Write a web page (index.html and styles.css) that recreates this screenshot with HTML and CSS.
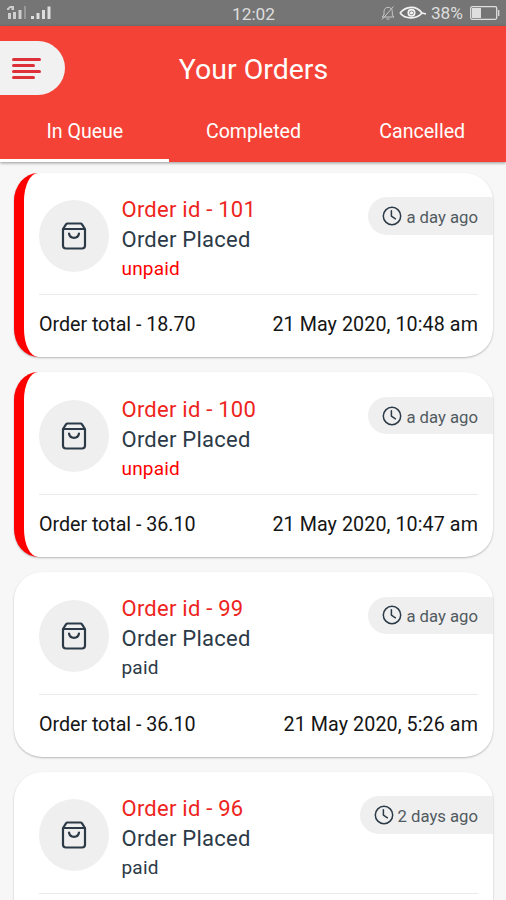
FILE: index.html
```html
<!DOCTYPE html>
<html lang="en">
<head>
<meta charset="utf-8">
<title>Your Orders</title>
<link rel="stylesheet" href="styles.css">
</head>
<body>
<svg class="defs" aria-hidden="true">
  <symbol id="bag" viewBox="0 0 26 28" fill="none" stroke="currentColor" stroke-width="2.200" stroke-linejoin="round" stroke-linecap="round">
    <path d="M2 7 5 2.300Q5.500 1.500 6.400 1.500H19.600Q20.500 1.500 21 2.300L24 7V23.500Q24 26.500 21 26.500H5Q2 26.500 2 23.500ZM2 7H24M8 11.500C9 17.200 17 17.200 18 11.500"/>
  </symbol>
  <symbol id="clock" viewBox="0 0 20 20" fill="none" stroke="currentColor" stroke-width="1.5" stroke-linecap="round" stroke-linejoin="round">
    <circle cx="10" cy="10" r="8.7"/><path d="M9.4 4.8V10.2L13.4 12.8"/>
  </symbol>
</svg>
<div class="status">
  <svg class="signal" viewBox="0 0 46 16" fill="currentColor"><path d="M1 3.500 4 1H8V5H5.500V3H4L3 5H1ZM2 8h3v6H2zM7 7h3v7H7zM12.500 5h3v9h-3z" opacity=".85"/><path d="M18 1h2v13H18z" opacity=".35"/><path d="M25 11h3v3h-3zM30.500 8h3v6h-3zM36 5h3v9h-3zM41.500 1.500h3V14h-3z"/></svg>
  <span class="time">12:02</span>
  <div class="indicators">
    <svg class="bell" viewBox="0 0 14 16" fill="none" stroke="currentColor"><path d="M1 12H13L11.300 10V6.500C11.300 1 3 1 3 6.500V10ZM5.500 14H8.500M1 14.500 12.500 1.500"/></svg>
    <svg class="eye" viewBox="0 0 28 14" fill="none" stroke="currentColor" stroke-width="1.700"><path d="M1 7C7 0 17-1 23 7C18 13 7 14 1 7M23 7L27 8"/><circle cx="12.500" cy="6.800" r="3.200"/><circle cx="12.500" cy="6.800" r=".8"/></svg>
    <span class="percent">38%</span>
    <svg class="battery" viewBox="0 0 30 14" fill="none" stroke="currentColor" stroke-width="1.300"><rect x=".7" y=".7" width="26" height="12.600" rx="1.500"/><path d="M28.700 4V10"/><path d="M2 2H11V12H2Z" fill="currentColor" stroke="none"/></svg>
  </div>
</div>
<header class="header">
  <div class="titlebar">
    <button class="menu" aria-label="Menu"><i></i><i></i><i></i><i></i></button>
    <h1>Your Orders</h1>
  </div>
  <nav class="tabs">
    <a class="tab active">In Queue</a>
    <a class="tab">Completed</a>
    <a class="tab">Cancelled</a>
  </nav>
</header>
<main class="orders">
  <article class="card unpaid">
    <div class="top">
      <div class="avatar"><svg><use href="#bag"/></svg></div>
      <div class="info"><h2>Order id - 101</h2><p class="state">Order Placed</p><p class="pay">unpaid</p></div>
      <div class="ago"><svg><use href="#clock"/></svg><span>a day ago</span></div>
    </div>
    <div class="bottom"><span class="total">Order total - 18.70</span><span class="date">21 May 2020, 10:48 am</span></div>
  </article>
  <article class="card unpaid">
    <div class="top">
      <div class="avatar"><svg><use href="#bag"/></svg></div>
      <div class="info"><h2>Order id - 100</h2><p class="state">Order Placed</p><p class="pay">unpaid</p></div>
      <div class="ago"><svg><use href="#clock"/></svg><span>a day ago</span></div>
    </div>
    <div class="bottom"><span class="total">Order total - 36.10</span><span class="date">21 May 2020, 10:47 am</span></div>
  </article>
  <article class="card">
    <div class="top">
      <div class="avatar"><svg><use href="#bag"/></svg></div>
      <div class="info"><h2>Order id - 99</h2><p class="state">Order Placed</p><p class="pay">paid</p></div>
      <div class="ago"><svg><use href="#clock"/></svg><span>a day ago</span></div>
    </div>
    <div class="bottom"><span class="total">Order total - 36.10</span><span class="date">21 May 2020, 5:26 am</span></div>
  </article>
  <article class="card">
    <div class="top">
      <div class="avatar"><svg><use href="#bag"/></svg></div>
      <div class="info"><h2>Order id - 96</h2><p class="state">Order Placed</p><p class="pay">paid</p></div>
      <div class="ago"><svg><use href="#clock"/></svg><span>2 days ago</span></div>
    </div>
  </article>
</main>
</body>
</html>
```
FILE: styles.css
```css
* { box-sizing: border-box; }
body {
  margin: 0;
  height: 900px;
  overflow: hidden;
  display: flex;
  flex-direction: column;
  background: #f7f7f7;
  font-family: Roboto, sans-serif;
  color: #2c3a47;
}
h1, h2, p { margin: 0; font-weight: 400; }
svg { display: block; }
.defs { position: absolute; width: 0; height: 0; }

.status {
  flex: none;
  height: 25.500px;
  padding: 0 6px 0 6px;
  display: grid;
  grid-template-columns: 1fr auto 1fr;
  align-items: center;
  background: #757575;
  color: #dedede;
  font-size: 17.300px;
  line-height: 24px;
}
.signal { width: 46px; height: 16px; }
.time { padding: 2px 0 0 1px; }
.indicators { display: flex; justify-content: flex-end; align-items: center; }
.bell { width: 14px; height: 16px; margin-right: 4px; opacity: .8; }
.eye { width: 28px; height: 14px; margin-right: 4px; color: #f4f4f4; }
.percent { margin-right: 7px; }
.battery { width: 30px; height: 14px; }

.header {
  position: relative;
  flex: none;
  height: 136.500px;
  background: #f44336;
  color: #fff;
  box-shadow: 0 1px 3px rgba(0, 0, 0, .4);
}
.titlebar {
  height: 85px;
  display: grid;
  grid-template-columns: 65px 1fr 65px;
  align-items: center;
}
.titlebar h1 { text-align: center; font-size: 28.500px; line-height: 34px; padding: 4px 0 0 1px; }
.menu {
  width: 65px;
  height: 54px;
  border: 0;
  border-radius: 0 27px 27px 0;
  background: #f1f1f1;
  padding: 0 0 0 12px;
  display: flex;
  flex-direction: column;
  justify-content: center;
  gap: 3px;
}
.menu i { width: 29px; height: 3px; border-radius: 2px; background: #dd3038; }
.menu i:nth-child(even) { width: 23px; }
.tabs { display: grid; grid-template-columns: repeat(3, 1fr); height: 51.500px; }
.tab { text-align: center; font-size: 19.600px; line-height: 24px; padding: 9px 0 0 1px; border-bottom: 3.500px solid transparent; }
.tab.active { border-bottom-color: #fff; }

.orders {
  flex: 1;
  min-height: 0;
  overflow: hidden;
  padding: 10.700px 13px 0 14px;
  display: flex;
  flex-direction: column;
  gap: 15px;
}
.card {
  flex: none;
  height: 184.700px;
  border-radius: 28px;
  background: #fff;
  box-shadow: 0 1px 2px rgba(0, 0, 0, .26);
  padding-left: 25px;
}
.card.unpaid {
  border-left: 10px solid #f00;
  border-radius: 24px 28px 28px 24px / 28px;
  padding-left: 15px;
}
.top { display: flex; align-items: flex-start; height: 122.500px; padding-top: 24.500px; margin-right: 15px; border-bottom: 1.500px solid #ebebeb; }
.avatar {
  width: 70px;
  height: 72px;
  margin-top: 3px;
  border-radius: 50%;
  background: #efefef;
  display: flex;
  align-items: center;
  justify-content: center;
}
.avatar svg { width: 26px; height: 28px; margin-right: 1px; }
.info { margin: -2.200px auto 0 12.500px; white-space: nowrap; }
.info h2 { color: #ee2420; font-size: 22px; line-height: 30px; letter-spacing: .24px; }
.state { font-size: 22px; line-height: 30px; letter-spacing: .24px; }
.pay { font-size: 19px; line-height: 28px; letter-spacing: .2px; }
.unpaid .pay { color: #f00; }
.ago {
  height: 37.500px;
  margin-right: -15px;
  padding: 1px 15px 0 14px;
  border-radius: 19px 0 0 19px;
  background: #efefef;
  display: flex;
  align-items: center;
  gap: 4px;
  font-size: 16.700px;
  color: #525a61;
  white-space: nowrap;
}
.ago svg { width: 20px; height: 20px; margin-top: -1px; color: #2c3a47; }
.ago span { padding-top: 2px; }
.bottom { display: flex; justify-content: space-between; margin-right: 15px; padding-top: 17px; font-size: 19.700px; line-height: 26px; color: #151515; }
.total { letter-spacing: -.04px; }
.date { letter-spacing: .08px; }
```
